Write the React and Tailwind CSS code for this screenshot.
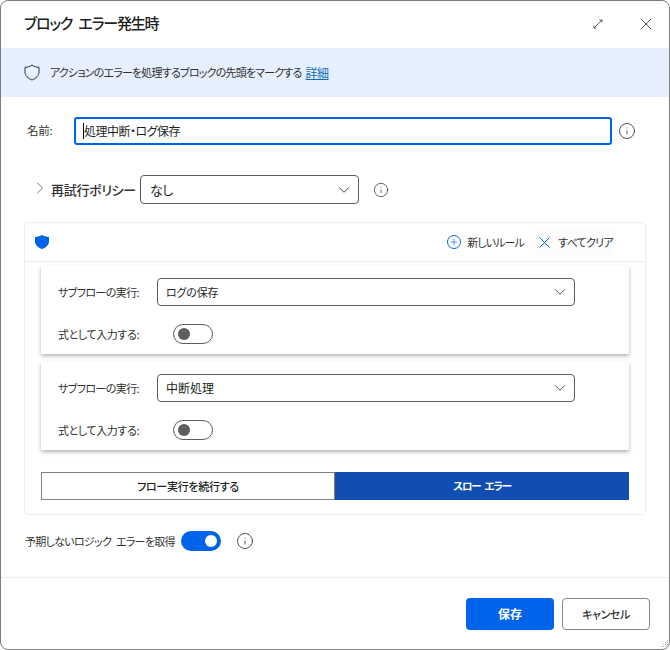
import { ChevronDown, ChevronRight, Info, Plus, X } from "lucide-react";

const font = "font-['Noto_Sans_CJK_JP','Noto_Sans',sans-serif] [font-feature-settings:'palt']";

const Dropdown = ({ value, className, textClass }) => (
  <div className={`flex items-center justify-between border border-[#605e5c] rounded-[4px] bg-white ${className}`}>
    <span className={`text-[#201f1e] leading-none ${textClass}`}>{value}</span>
    <ChevronDown className="w-[18px] h-[18px] text-[#323130]" strokeWidth={1.2} />
  </div>
);

const InfoIcon = ({ size = "w-[18px] h-[18px]" }) => (
  <Info className={`${size} text-[#323130]`} strokeWidth={1.1} />
);

const Toggle = () => (
  <div className="w-[40px] h-[20px] rounded-full border border-[#605e5c] flex items-center pl-[4px]">
    <div className="w-[12px] h-[12px] rounded-full bg-[#605e5c]" />
  </div>
);

const RuleCard = ({ value, textClass }) => (
  <div className="h-[88px] bg-white shadow-[0_2px_4px_rgba(0,0,0,0.3)] pt-[12px] pl-[17px] pr-[54px]">
    <div className="flex items-center h-[28px]">
      <span className="w-[99px] text-[11px] tracking-[-0.6px] whitespace-nowrap text-[#323130] leading-none">サブフローの実行:</span>
      <Dropdown value={value} textClass={textClass} className="flex-1 h-[28px] pl-[8px] pr-[5px]" />
    </div>
    <div className="flex items-center h-[20px] mt-[18px]">
      <span className="w-[115px] text-[11px] tracking-[-0.4px] whitespace-nowrap text-[#323130] leading-none">式として入力する:</span>
      <Toggle />
    </div>
  </div>
);

export default function App() {
  return (
    <div className={`relative w-[670px] h-[650px] bg-white border border-[#7d7d7d] rounded-[8px] flex flex-col overflow-hidden ${font}`}>
      {/* Title */}
      <div className="h-[47px] flex items-center justify-between pl-[23px] pr-[13px] pb-[2px] shrink-0">
        <h1 className="text-[15px] tracking-[-1.200px] [word-spacing:4px] font-medium text-[#201f1e]">ブロック エラー発生時</h1>
        <div className="flex items-center gap-[32px]">
          <svg width="12" height="12" viewBox="0 0 12 12" fill="none" stroke="#605e5c" strokeWidth="1">
            <path d="M2 10 10 2M7.500 2H10V4.500M2 7.500V10H4.500" />
          </svg>
          <X className="w-[20px] h-[20px] text-[#323130]" strokeWidth={1} />
        </div>
      </div>

      {/* Banner */}
      <div className="h-[49px] bg-[#e5effe] flex items-center pl-[23px] shrink-0">
        <svg width="16" height="17" viewBox="0 0 16 17" fill="none" stroke="#323130" strokeWidth="1">
          <path d="M8 1C10 2.500 12.500 3.300 15 3.300V8C15 11.500 12 14.500 8 16C4 14.500 1 11.500 1 8V3.300C3.500 3.300 6 2.500 8 1Z" />
        </svg>
        <span className="ml-[10px] text-[11px] tracking-[-0.8px] whitespace-nowrap text-[#323130] leading-none">アクションのエラーを処理するブロックの先頭をマークする</span>
        <a className="ml-[4px] text-[12px] tracking-[-0.5px] text-[#0f6cbd] underline leading-none">詳細</a>
      </div>

      {/* Name */}
      <div className="flex items-center h-[28px] mt-[20px] pl-[26px] shrink-0">
        <label className="w-[47px] text-[11.500px] tracking-[-0.3px] text-[#323130] leading-none">名前:</label>
        <div className="w-[538px] h-[28px] border-2 border-[#0064ea] rounded-[3px] flex items-center pl-[7px]">
          <span className="w-px h-[16px] bg-black" />
          <span className="text-[12px] tracking-[-0.5px] text-[#201f1e] leading-none">処理中断・ログ保存</span>
        </div>
        <div className="ml-[6px]"><InfoIcon /></div>
      </div>

      {/* Retry policy */}
      <div className="flex items-center h-[29px] mt-[30px] pl-[29px] shrink-0">
        <ChevronRight className="w-[20px] h-[20px] text-[#605e5c] -mt-[3px]" strokeWidth={1} />
        <span className="ml-[1px] w-[89px] text-[13px] tracking-[-0.3px] whitespace-nowrap font-medium text-[#323130] leading-none">再試行ポリシー</span>
        <Dropdown value="なし" textClass="text-[13px] tracking-[-0.5px]" className="w-[219px] h-[29px] pl-[9px] pr-[5px]" />
        <div className="ml-[14px]"><InfoIcon size="w-[16px] h-[16px]" /></div>
      </div>

      {/* Rule panel */}
      <div className="ml-[23px] mt-[18px] w-[622px] h-[293px] border border-[#ededed] rounded-[4px] shrink-0">
        <div className="h-[39px] border-b border-[#ededed] flex items-center justify-between pl-[10px] pr-[31px]">
          <svg width="14" height="14" viewBox="0 0 14 14" fill="#0064ea">
            <path d="M7 0C8.800 1.200 11 1.800 14 1.900V6.500C14 10 11 12.800 7 14C3 12.800 0 10 0 6.500V1.900C3 1.800 5.200 1.200 7 0Z" />
          </svg>
          <div className="flex items-center">
            <div className="w-[14px] h-[14px] rounded-full border border-[#0064ea] flex items-center justify-center">
              <Plus className="w-[10px] h-[10px] text-[#0064ea]" strokeWidth={1.5} />
            </div>
            <span className="ml-[6px] text-[11px] tracking-[-0.9px] whitespace-nowrap text-[#323130] leading-none">新しいルール</span>
            <div className="ml-[11px] h-[27px] w-[79px] pl-[4px] bg-[#fcfcfc] rounded-[4px] flex items-center">
              <svg width="11" height="11" viewBox="0 0 11 11" fill="none" stroke="#0064ea" strokeWidth="1">
                <path d="M0.500 0.500 10.500 10.500M10.500 0.500 0.500 10.500" />
              </svg>
              <span className="ml-[8px] text-[11px] tracking-[-0.7px] whitespace-nowrap text-[#323130] leading-none">すべてクリア</span>
            </div>
          </div>
        </div>
        <div className="mx-[16px] mt-[4px] flex flex-col gap-[8px]">
          <RuleCard value="ログの保存" textClass="text-[11px] tracking-[-0.2px]" />
          <RuleCard value="中断処理" textClass="text-[12px]" />
        </div>
        <div className="mx-[16px] mt-[22px] h-[28px] flex">
          <div className="w-[294px] border border-[#7f7f7f] flex items-center justify-center text-[11px] tracking-[-0.3px] font-medium text-[#201f1e] leading-none">フロー実行を続行する</div>
          <div className="flex-1 bg-[#114eb1] flex items-center justify-center text-[10.500px] tracking-[-1.200px] [word-spacing:3px] font-bold text-white leading-none">スロー エラー</div>
        </div>
      </div>

      {/* Unexpected logic errors */}
      <div className="flex items-center h-[20px] mt-[16px] pl-[24px] shrink-0">
        <span className="text-[11px] tracking-[-0.7px] [word-spacing:3px] whitespace-nowrap text-[#323130] leading-none w-[156px]">予期しないロジック エラーを取得</span>
        <div className="w-[40px] h-[20px] rounded-full bg-[#0064ea] flex items-center justify-end pr-[4px]">
          <div className="w-[12px] h-[12px] rounded-full bg-white" />
        </div>
        <div className="ml-[15px]"><InfoIcon /></div>
      </div>

      {/* Footer */}
      <div className="mt-[26px] border-t border-[#ededed] flex-1 flex justify-end items-start pt-[20px] pr-[19px] gap-[8px]">
        <button className="w-[88px] h-[32px] rounded-[4px] bg-[#0064ea] text-white text-[12px] font-bold">保存</button>
        <button className="w-[88px] h-[32px] rounded-[4px] border border-[#8a8886] bg-white text-[#323130] text-[11px] tracking-[-0.4px] font-medium">キャンセル</button>
      </div>

      {/* Resize grip */}
      <svg className="absolute right-0 bottom-0" width="10" height="10" viewBox="0 0 10 10" fill="#a9b0c0">
        <path d="M8 1h1v1H8zM6 3h1v1H6zM8 3h1v1H8zM4 5h1v1H4zM6 5h1v1H6zM8 5h1v1H8zM2 7h1v1H2zM4 7h1v1H4zM6 7h1v1H6zM8 7h1v1H8z" />
      </svg>
    </div>
  );
}
